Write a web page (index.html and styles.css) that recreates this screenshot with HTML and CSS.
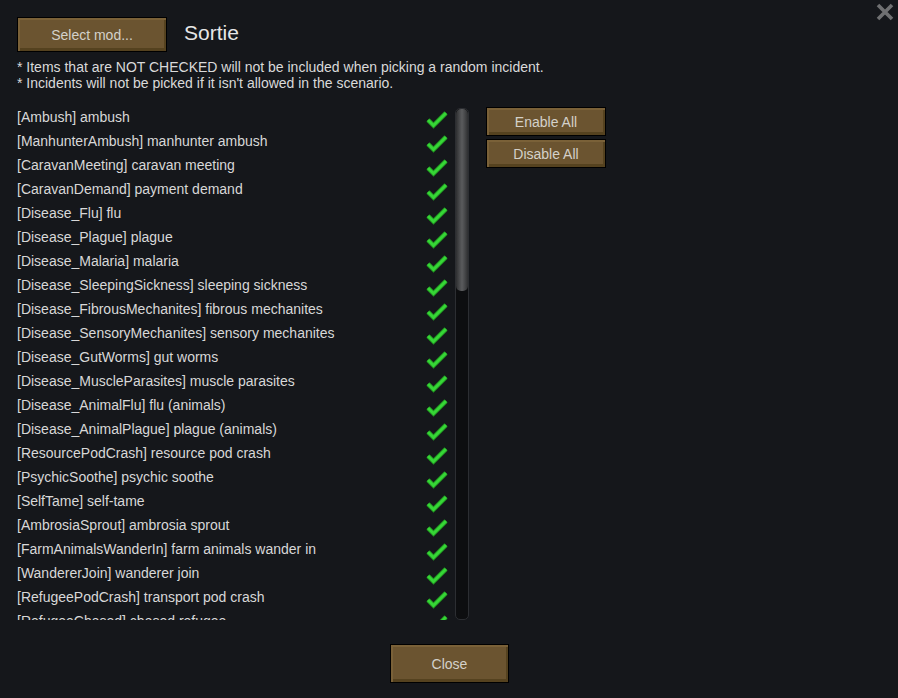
FILE: index.html
```html
<!DOCTYPE html>
<html>
<head>
<meta charset="utf-8">
<link rel="stylesheet" href="styles.css">
</head>
<body>
<div class="window">
  <svg class="close-x" width="18" height="18" viewBox="0 0 18 18"><path d="M2 2 L16 16 M16 2 L2 16" stroke="#6f7072" stroke-width="3.6" fill="none"/></svg>
  <div class="header">
    <button class="btn btn-select">Select mod...</button>
    <div class="title">Sortie</div>
  </div>
  <div class="notes">
    <div>* Items that are NOT CHECKED will not be included when picking a random incident.</div>
    <div>* Incidents will not be picked if it isn't allowed in the scenario.</div>
  </div>
  <div class="body">
    <div class="list" id="list"></div>
    <div class="scrollbar"><div class="thumb"></div></div>
    <div class="side">
      <button class="btn btn-side">Enable All</button>
      <button class="btn btn-side">Disable All</button>
    </div>
  </div>
  <div class="footer">
    <button class="btn btn-close">Close</button>
  </div>
</div>
<script>
var items = [
"[Ambush] ambush","[ManhunterAmbush] manhunter ambush","[CaravanMeeting] caravan meeting","[CaravanDemand] payment demand","[Disease_Flu] flu","[Disease_Plague] plague","[Disease_Malaria] malaria","[Disease_SleepingSickness] sleeping sickness","[Disease_FibrousMechanites] fibrous mechanites","[Disease_SensoryMechanites] sensory mechanites","[Disease_GutWorms] gut worms","[Disease_MuscleParasites] muscle parasites","[Disease_AnimalFlu] flu (animals)","[Disease_AnimalPlague] plague (animals)","[ResourcePodCrash] resource pod crash","[PsychicSoothe] psychic soothe","[SelfTame] self-tame","[AmbrosiaSprout] ambrosia sprout","[FarmAnimalsWanderIn] farm animals wander in","[WandererJoin] wanderer join","[RefugeePodCrash] transport pod crash","[RefugeeChased] chased refugee"];
var check = '<svg class="check" width="24" height="24" viewBox="0 0 24 24"><polyline points="3,15 8.5,20.5 21,8" fill="none" stroke="#1f8f1f" stroke-width="4.6"/><polyline points="3,15 8.5,20.5 21,8" fill="none" stroke="#36d636" stroke-width="3"/></svg>';
var html = '';
items.forEach(function(t){ html += '<div class="row"><span>' + t + '</span>' + check + '</div>'; });
document.getElementById('list').innerHTML = html;
</script>
</body>
</html>
```
FILE: styles.css
```css
html, body {
  margin: 0;
  padding: 0;
  background: #15171b;
}
body {
  width: 898px;
  height: 698px;
  overflow: hidden;
  font-family: "Liberation Sans", Arial, sans-serif;
  color: #d8d8d8;
}
.window {
  position: relative;
  width: 898px;
  height: 698px;
  box-sizing: border-box;
  padding: 17px 0 0 17px;
  display: flex;
  flex-direction: column;
}
.close-x {
  position: absolute;
  left: 876px;
  top: 3px;
}
.btn {
  font-family: "Liberation Sans", Arial, sans-serif;
  font-size: 14px;
  color: #d4d1ca;
  background: #6b5430;
  border: 1px solid #000;
  box-shadow: inset 2px 2px 0 #7a6138, inset -2px -3px 0 #55421f;
  padding: 0;
  margin: 0;
  cursor: pointer;
}
.header {
  display: flex;
  align-items: center;
  gap: 17px;
  height: 35px;
}
.btn-select {
  width: 150px;
  height: 35px;
}
.title {
  font-size: 21px;
  color: #e6e6e6;
  margin-top: -4px;
}
.notes {
  margin-top: 7px;
  font-size: 14px;
  line-height: 16px;
  color: #dadada;
}
.body {
  margin-top: 14px;
  display: flex;
  align-items: flex-start;
}
.list {
  width: 432px;
  height: 515px;
  overflow: hidden;
}
.row {
  height: 24px;
  display: flex;
  justify-content: space-between;
  align-items: center;
  font-size: 14px;
}
.row span {
  line-height: 24px;
}
.check {
  flex: none;
}
.scrollbar {
  margin-top: 3px;
  margin-left: 6px;
  width: 14px;
  height: 512px;
  box-sizing: border-box;
  background: #0d0e10;
  border: 1px solid #2c2e32;
  border-radius: 5px;
  position: relative;
}
.thumb {
  width: 12px;
  height: 182px;
  border-radius: 5px;
  box-sizing: border-box;
  background: linear-gradient(to right, #2e2f31 0%, #4a4b4d 30%, #5a5b5d 50%, #4a4b4d 70%, #2e2f31 100%);
}
.side {
  margin-left: 17px;
  margin-top: 2px;
  display: flex;
  flex-direction: column;
  gap: 3px;
}
.btn-side {
  width: 120px;
  height: 29px;
}
.footer {
  margin-top: 24px;
  margin-left: -17px;
  display: flex;
  justify-content: center;
  padding-left: 1px;
}
.btn-close {
  width: 119px;
  height: 39px;
}
```
